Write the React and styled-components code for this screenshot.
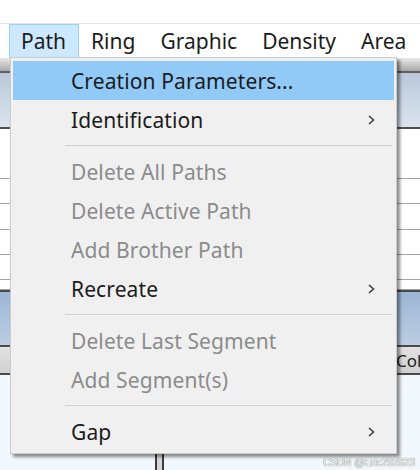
import React from "react";
import styled, { createGlobalStyle } from "styled-components";

const GlobalStyle = createGlobalStyle`
  html, body {
    margin: 0;
    padding: 0;
    background: #ffffff;
  }
  body {
    font-family: "Noto Sans", "Open Sans", sans-serif;
  }
`;

const Page = styled.div`
  position: relative;
  width: 420px;
  height: 470px;
  overflow: hidden;
  background: #ffffff;
`;

const TopBlank = styled.div`
  height: 23px;
  background: #ffffff;
`;

const MenuBar = styled.div`
  display: flex;
  align-items: stretch;
  height: 34px;
  padding-left: 9px;
  border-top: 1px solid #e4e4e4;
  background: #ffffff;
  white-space: nowrap;
`;

const MenuTitle = styled.div`
  display: flex;
  align-items: center;
  padding: 0 12px 0 11px;
  font-size: 21px;
  color: #1b1b1b;
  border: 1px solid ${(p) => (p.$open ? "#99d1ff" : "transparent")};
  background: ${(p) => (p.$open ? "#cce8ff" : "transparent")};
`;

const Backdrop = styled.div`
  display: flex;
  flex-direction: column;
`;

const GrayStrip = styled.div`
  height: 13px;
  background: linear-gradient(#e8e8e8, #a9a9a9);
  border-bottom: 2px solid #5e5e5e;
`;

const BlueHead = styled.div`
  height: 54px;
  background: linear-gradient(#b9c8da, #dbe4ef);
  border-bottom: 2px solid #4e4e4e;
`;

const GridRow = styled.div`
  height: ${(p) => p.$h}px;
  background: #ffffff;
  border-bottom: 1px solid #a3a3a3;
`;

const DarkLine = styled.div`
  height: 2px;
  background: #4a4a4a;
`;

const BlueBand = styled.div`
  height: 53px;
  background: linear-gradient(#9cb6d6, #bccde2);
`;

const ColumnRow = styled.div`
  display: flex;
  justify-content: flex-end;
  align-items: center;
  height: 26px;
  background: linear-gradient(#e2e2e2, #cfcfcf);
  font-size: 17px;
  color: #202020;
  overflow: hidden;
  white-space: nowrap;
`;

const ColumnLabel = styled.span`
  width: 24px;
  overflow: hidden;
`;

const LowerArea = styled.div`
  display: flex;
  height: 120px;
  background: #f2f8fd;
`;

const Splitter = styled.div`
  margin-left: 155px;
  width: 5px;
  border-left: 2px solid #3c3c3c;
  border-right: 2px solid #3c3c3c;
  background: #d8d8d8;
`;

const Dropdown = styled.div`
  position: absolute;
  left: 10px;
  top: 57px;
  width: 381px;
  padding: 3px 2px 2px 2px;
  background: #f0f0f0;
  border: 1px solid #cccccc;
  box-shadow: 3px 3px 3px rgba(0, 0, 0, 0.45);
  display: flex;
  flex-direction: column;
`;

const Item = styled.div`
  display: flex;
  align-items: center;
  height: 39px;
  padding-left: 58px;
  padding-right: 18px;
  font-size: 21px;
  letter-spacing: 0.1px;
  white-space: nowrap;
  color: ${(p) => (p.$disabled ? "#8b8b8b" : "#1b1b1b")};
  background: ${(p) => (p.$active ? "#91c9f7" : "transparent")};
`;

const ItemLabel = styled.span`
  flex: 1;
`;

const Chevron = styled.svg`
  width: 10px;
  height: 14px;
`;

const Separator = styled.div`
  height: 1px;
  margin: 6px 2px 6px 52px;
  background: #cfcfcf;
`;

const Watermark = styled.div`
  position: absolute;
  right: 5px;
  bottom: 2px;
  font-family: "Liberation Sans", Arial, sans-serif;
  font-size: 10px;
  color: #ffffff;
  text-shadow: 0 0 1px #777, 0 0 1px #777;
`;

const menus = [
  { name: "Path", open: true },
  { name: "Ring" },
  { name: "Graphic" },
  { name: "Density" },
  { name: "Area" },
];

const entries = [
  { label: "Creation Parameters...", active: true },
  { label: "Identification", sub: true },
  { sep: true },
  { label: "Delete All Paths", disabled: true },
  { label: "Delete Active Path", disabled: true },
  { label: "Add Brother Path", disabled: true },
  { label: "Recreate", sub: true },
  { sep: true },
  { label: "Delete Last Segment", disabled: true },
  { label: "Add Segment(s)", disabled: true },
  { sep: true },
  { label: "Gap", sub: true },
];

const Arrow = () => (
  <Chevron viewBox="0 0 10 14">
    <path d="M3 3 L7.5 7 L3 11" fill="none" stroke="#3a3a3a" strokeWidth="1.5" />
  </Chevron>
);

export default function App() {
  return (
    <>
      <GlobalStyle />
      <Page>
        <TopBlank />
        <MenuBar>
          {menus.map((m) => (
            <MenuTitle key={m.name} $open={m.open}>
              {m.name}
            </MenuTitle>
          ))}
        </MenuBar>
        <Backdrop>
          <GrayStrip />
          <BlueHead />
          <GridRow $h={49} />
          <GridRow $h={24} />
          <GridRow $h={25} />
          <GridRow $h={24} />
          <GridRow $h={24} />
          <GridRow $h={9} />
          <DarkLine />
          <BlueBand />
          <DarkLine />
          <ColumnRow>
            <ColumnLabel>Colo</ColumnLabel>
          </ColumnRow>
          <DarkLine />
          <LowerArea>
            <Splitter />
          </LowerArea>
        </Backdrop>
        <Dropdown>
          {entries.map((e, i) =>
            e.sep ? (
              <Separator key={i} />
            ) : (
              <Item key={i} $active={e.active} $disabled={e.disabled}>
                <ItemLabel>{e.label}</ItemLabel>
                {e.sub && <Arrow />}
              </Item>
            )
          )}
        </Dropdown>
        <Watermark>CSDN @Eric292823</Watermark>
      </Page>
    </>
  );
}
